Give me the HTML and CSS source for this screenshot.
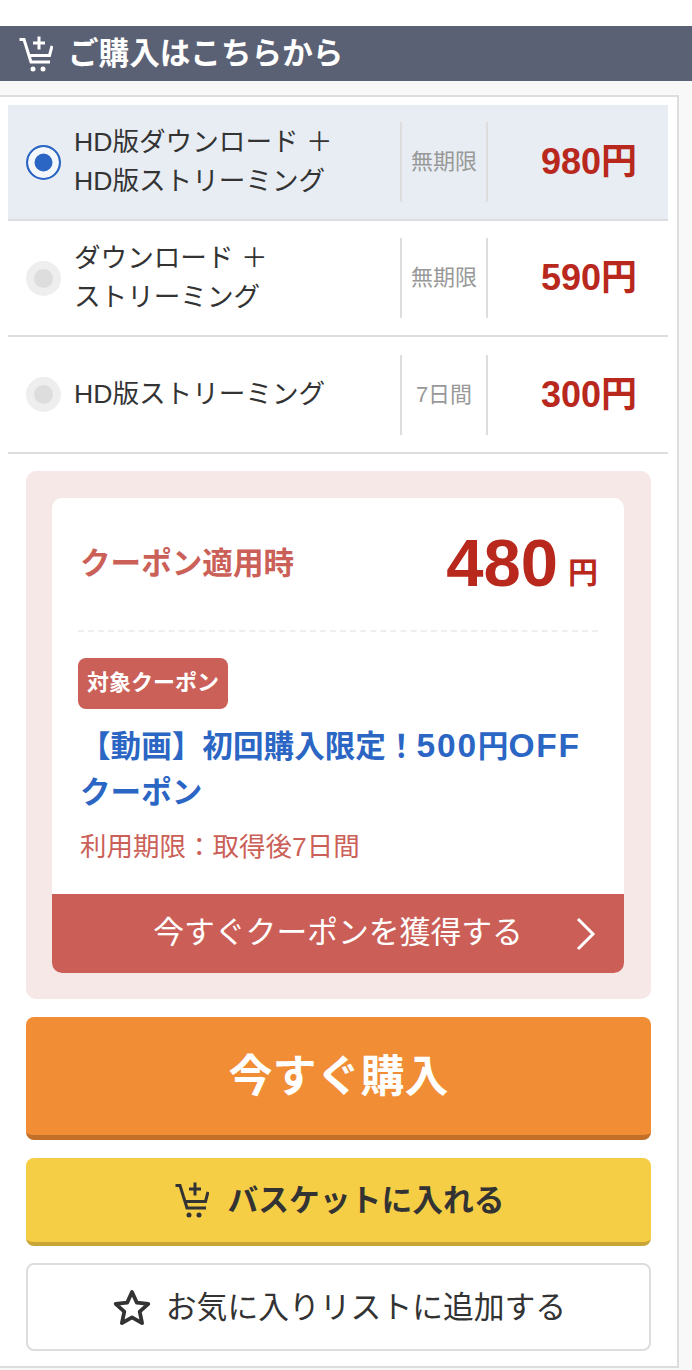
FILE: index.html
```html
<!DOCTYPE html>
<html lang="ja">
  <head>
    <meta charset="UTF-8" />
    <meta name="viewport" content="width=device-width, initial-scale=1.0" />
    <title>ご購入はこちらから</title>
    <link rel="stylesheet" href="styles.css">
  </head>
  <body>
    <h2 class="heading">
      <svg class="cart-icon" viewBox="0 0 34 37" fill="none" stroke="currentColor" stroke-width="3">
        <path d="M0.500 4.500H5L12 27H31" />
        <path d="M33 11L30.500 20.500H9" />
        <path d="M20 1.500v13M14 8h12" />
        <circle cx="14" cy="34" r="2.500" fill="currentColor" stroke="none" />
        <circle cx="24" cy="34" r="2.500" fill="currentColor" stroke="none" />
      </svg>
      <span class="label">ご購入はこちらから</span>
    </h2>
    <div class="panel">
      <div class="plan selected">
        <span class="radio"></span>
        <div class="plan-name">HD版ダウンロード ＋<br />HD版ストリーミング</div>
        <div class="plan-term">無期限</div>
        <div class="plan-price"><span class="label">980円</span></div>
      </div>
      <div class="plan">
        <span class="radio"></span>
        <div class="plan-name">ダウンロード ＋<br />ストリーミング</div>
        <div class="plan-term">無期限</div>
        <div class="plan-price"><span class="label">590円</span></div>
      </div>
      <div class="plan">
        <span class="radio"></span>
        <div class="plan-name">HD版ストリーミング</div>
        <div class="plan-term">7日間</div>
        <div class="plan-price"><span class="label">300円</span></div>
      </div>

      <div class="actions">
        <div class="coupon-box">
          <div class="coupon">
            <div class="coupon-body">
              <div class="coupon-price">
                <span class="coupon-label label">クーポン適用時</span>
                <span class="coupon-value">480<small>円</small></span>
              </div>
              <span class="coupon-badge">対象クーポン</span>
              <div class="coupon-title">【動画】初回購入限定！<span class="latin">500</span>円<span class="latin">OFF</span><br />クーポン</div>
              <div class="coupon-limit">利用期限：取得後7日間</div>
            </div>
            <div class="coupon-button">
              今すぐクーポンを獲得する
              <svg class="chevron" viewBox="0 0 20 34" fill="none" stroke="currentColor" stroke-width="3">
                <path d="M2 2l15 15L2 32" />
              </svg>
            </div>
          </div>
        </div>

        <button type="button" class="btn btn-buy"><span class="label">今すぐ購入</span></button>
        <button type="button" class="btn btn-basket">
          <svg class="cart-icon" viewBox="0 0 34 37" fill="none" stroke="currentColor" stroke-width="3">
            <path d="M0.500 4.500H5L12 27H31" />
            <path d="M33 11L30.500 20.500H9" />
            <path d="M20 1.500v13M14 8h12" />
            <circle cx="14" cy="34" r="2.500" fill="currentColor" stroke="none" />
            <circle cx="24" cy="34" r="2.500" fill="currentColor" stroke="none" />
          </svg>
          <span class="label">バスケットに入れる</span>
        </button>
        <button type="button" class="btn btn-favorite">
          <svg class="star-icon" viewBox="0 0 38 37" fill="none" stroke="currentColor" stroke-width="3.800" stroke-linejoin="round">
            <path d="M19 3l4.800 10.600 11.500 1.300-8.600 7.800 2.400 11.400L19 28.300 8.900 34.100l2.400-11.400-8.600-7.800 11.500-1.300z" />
          </svg>
          <span class="label">お気に入りリストに追加する</span>
        </button>
      </div>
    </div>
  </body>
</html>
```

FILE: styles.css
```css
body {
  font-family: "Liberation Sans", "Noto Sans CJK JP", sans-serif;
  background-color: #f8f8f8;
  color: #333;
  margin: 0;
  padding-top: 26px;
  min-height: 1370px;
  box-sizing: border-box;
  background-image: linear-gradient(#fff, #fff);
  background-size: 100% 26px;
  background-repeat: no-repeat;
}
.label {
  padding-bottom: 6px;
}
.heading {
  display: flex;
  align-items: center;
  gap: 15px;
  height: 55px;
  margin: 0 0 14px;
  padding-left: 19px;
  background-color: #5b6174;
  color: #fff;
  font-size: 30.6px;
  font-weight: bold;
}
.heading .cart-icon {
  width: 34px;
  height: 37px;
}
.panel {
  width: 679px;
  height: 1273px;
  box-sizing: border-box;
  padding: 8px 9px 0 8px;
  background: #fff;
  border-top: 2px solid #ddd;
  border-right: 2px solid #ddd;
  border-bottom: 2px solid #ddd;
}
.plan {
  display: flex;
  align-items: center;
  height: 116px;
  box-sizing: border-box;
  padding-left: 18px;
  border-bottom: 2px solid #ddd;
}
.plan:nth-child(3) {
  height: 117px;
}
.plan.selected {
  background-color: #e7edf3;
}
.radio {
  flex: none;
  width: 35px;
  height: 35px;
  box-sizing: border-box;
  margin-right: 13px;
  border-radius: 50%;
  border: 8px solid #eee;
  background-color: #ddd;
}
.selected .radio {
  border: 2px solid #2b66c4;
  background: #2b66c4;
  box-shadow: inset 0 0 0 6.5px #f4f7fb;
}
.plan-name {
  flex: 1;
  font-size: 26.6px;
  line-height: 39px;
}
.plan-term {
  flex: none;
  width: 84px;
  height: 80px;
  line-height: 80px;
  border-left: 2px solid #ddd;
  border-right: 2px solid #ddd;
  text-align: center;
  font-size: 22px;
  color: #999;
}
.plan-price {
  display: flex;
  justify-content: flex-end;
  flex: none;
  width: 180px;
  padding-right: 31px;
  box-sizing: border-box;
  font-size: 36px;
  font-weight: bold;
  color: #b8281d;
}
.plan-price .label {
  padding-bottom: 8px;
}
.actions {
  display: flex;
  flex-direction: column;
  padding: 17px 17px 0 18px;
}
.coupon-box {
  height: 528px;
  box-sizing: border-box;
  padding: 27px 27px 26px 26px;
  margin-bottom: 18px;
  background-color: #f7e8e8;
  border-radius: 10px;
}
.coupon {
  display: flex;
  flex-direction: column;
  height: 100%;
  background: #fff;
  border-radius: 10px;
  overflow: hidden;
}
.coupon-body {
  flex: 1;
  padding: 0 26px;
}
.coupon-price {
  display: flex;
  justify-content: space-between;
  align-items: center;
  height: 132px;
  border-bottom: 2px dashed #eee;
  margin-bottom: 26px;
}
.coupon-label {
  padding-left: 2px;
  font-size: 30.6px;
  font-weight: bold;
  color: #cb6058;
}
.coupon-value {
  padding-bottom: 4px;
  font-size: 67px;
  font-weight: bold;
  color: #b8281d;
}
.coupon-value small {
  margin-left: 10px;
  font-size: 30px;
  vertical-align: 3px;
}
.coupon-badge {
  display: inline-block;
  width: 150px;
  height: 51px;
  line-height: 49px;
  text-align: center;
  border-radius: 8px;
  background-color: #cb6058;
  color: #fff;
  font-size: 22px;
  font-weight: bold;
}
.coupon-title {
  margin-top: 14px;
  padding-left: 2px;
  font-size: 30.6px;
  line-height: 46px;
  font-weight: bold;
  color: #2b66c4;
}
.coupon-title .latin {
  font-size: 33.5px;
  letter-spacing: 1.8px;
}
.coupon-limit {
  margin-top: 14px;
  padding-left: 2px;
  font-size: 26.5px;
  line-height: 36px;
  color: #cb6058;
}
.coupon-button {
  position: relative;
  height: 79px;
  line-height: 78px;
  text-align: center;
  background-color: #cb5f58;
  color: #fff;
  font-size: 30.8px;
}
.chevron {
  position: absolute;
  right: 28px;
  top: 23px;
  width: 20px;
  height: 34px;
}
.btn {
  display: flex;
  align-items: center;
  justify-content: center;
  width: 100%;
  padding: 0;
  font-family: inherit;
  border-radius: 8px;
  cursor: pointer;
}
.btn-buy {
  height: 123px;
  margin-bottom: 18px;
  border: none;
  border-bottom: 5px solid #c27029;
  background-color: #f08d35;
  color: #fff;
  font-size: 44px;
  font-weight: bold;
}
.btn-basket {
  gap: 18px;
  height: 88px;
  margin-bottom: 17px;
  padding-left: 3px;
  border: none;
  border-bottom: 4px solid #c8a534;
  background-color: #f6ce46;
  color: #333;
  font-size: 30.8px;
  font-weight: bold;
}
.btn-basket .cart-icon {
  width: 34px;
  height: 37px;
  margin-bottom: 2px;
}
.btn-favorite {
  gap: 15px;
  height: 88px;
  padding-left: 2px;
  border: 2px solid #ddd;
  background: #fff;
  color: #333;
  font-size: 30.8px;
}
.star-icon {
  width: 38px;
  height: 37px;
}
```
